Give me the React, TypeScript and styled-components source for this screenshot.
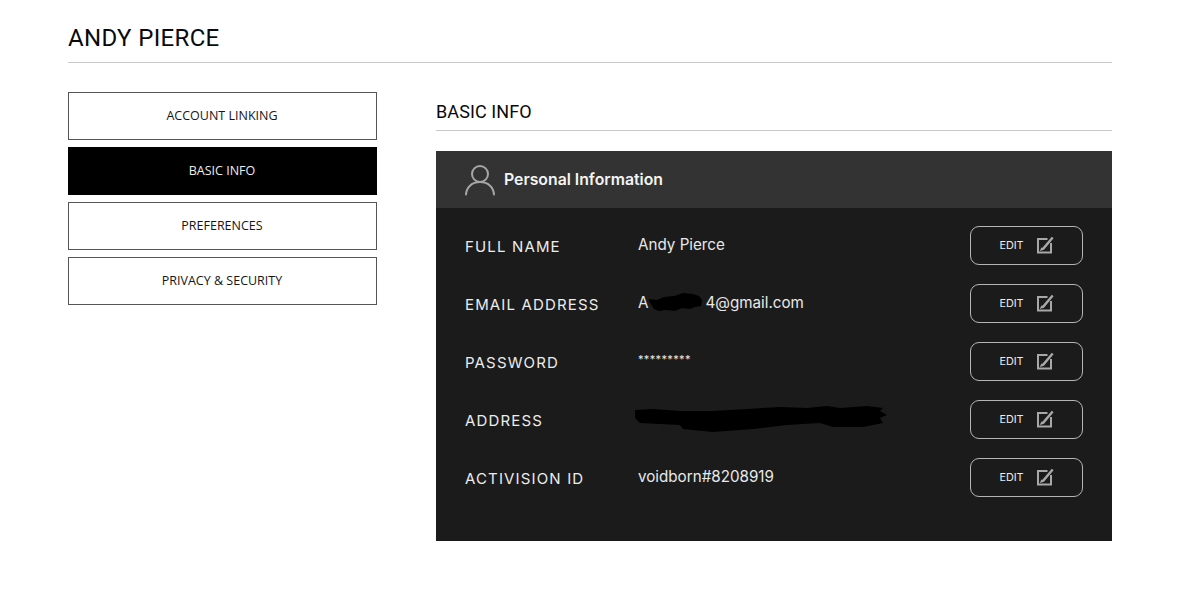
import React from "react";
import styled, { createGlobalStyle } from "styled-components";

const Global = createGlobalStyle`
  html, body { margin: 0; padding: 0; background: #fff; }
  body { font-family: "Open Sans", "Liberation Sans", sans-serif; }
`;

const Page = styled.div`
  width: 1044px;
  height: 606px;
  padding: 0 88px 0 68px;
  overflow: hidden;
`;

const Header = styled.header`
  box-sizing: border-box;
  height: 63px;
  padding-top: 23px;
  border-bottom: 1px solid #c9c9c9;
`;

const Title = styled.h1`
  margin: 0;
  font: 400 24px/30px Roboto, "Liberation Sans", sans-serif;
  letter-spacing: 0.35px;
  color: #0a0a0a;
`;

const Columns = styled.div`
  display: flex;
  gap: 59px;
  padding-top: 29px;
`;

const Sidebar = styled.nav`
  width: 309px;
  flex: none;
  display: flex;
  flex-direction: column;
  gap: 7px;
`;

const NavItem = styled.div<{ $active?: boolean }>`
  height: 48px;
  box-sizing: border-box;
  display: flex;
  align-items: center;
  justify-content: center;
  border: 1px solid ${(p) => (p.$active ? "#000" : "#555")};
  background: ${(p) => (p.$active ? "#000" : "#fff")};
  color: ${(p) => (p.$active ? "#ececec" : "#161616")};
  font-size: 12.5px;
  letter-spacing: 0;
  padding: 0 1px 1px 0;
`;

const Main = styled.main`
  width: 676px;
  flex: none;
`;

const SectionTitle = styled.h2`
  margin: 0;
  height: 39px;
  box-sizing: border-box;
  padding-top: 8px;
  border-bottom: 1px solid #c9c9c9;
  font: 400 18px/24px Roboto, "Liberation Sans", sans-serif;
  letter-spacing: 0.1px;
  color: #0a0a0a;
`;

const Panel = styled.section`
  margin-top: 20px;
  height: 390px;
  background: #1b1b1b;
`;

const PanelHead = styled.div`
  height: 57px;
  background: #333;
  display: flex;
  align-items: center;
  gap: 8px;
  padding-left: 28px;
  color: #f4f4f4;
  font: 600 15.8px Inter, "Liberation Sans", sans-serif;
`;

const Rows = styled.div`
  padding: 17px 29px 0;
  display: flex;
  flex-direction: column;
  gap: 18px;
`;

const Row = styled.div`
  height: 40px;
  display: flex;
  align-items: center;
`;

const Label = styled.div`
  width: 173px;
  flex: none;
  padding-top: 2px;
  font: 400 15px Inter, "Liberation Sans", sans-serif;
  letter-spacing: 1.15px;
  color: #ececec;
`;

const Value = styled.div`
  flex: 1;
  display: flex;
  align-items: center;
  height: 20px;
  margin-top: -1px;
  font: 400 15.2px Inter, "Liberation Sans", sans-serif;
  color: #e8e8e8;
`;

const Stars = styled.span`
  font-size: 11px;
  letter-spacing: 0.35px;
  margin-top: -3px;
`;

const EditButton = styled.button`
  width: 113px;
  height: 39px;
  box-sizing: border-box;
  border: 1px solid #b5b5b5;
  border-radius: 9px;
  background: transparent;
  color: #ececec;
  display: flex;
  align-items: center;
  justify-content: center;
  gap: 12px;
  padding: 0;
  font: 400 10.8px Inter, "Liberation Sans", sans-serif;
`;

const Scribble = styled.svg`
  display: block;
  flex: none;
`;

const AddressScribble = styled(Scribble)`
  margin-left: -3px;
`;

const UserIcon = () => (
  <svg width="32" height="32" viewBox="0 0 32 32" fill="none" stroke="#a6a6a6" strokeWidth="2" strokeLinecap="round">
    <circle cx="16" cy="10" r="8" />
    <path d="M2 30.500c.5-7.500 6-12.500 14-12.500s13.500 5 14 12.500" />
  </svg>
);

const EditIcon = () => (
  <svg width="18" height="18" viewBox="0 0 18 18" fill="none" stroke="#a8a8a8" strokeWidth="2">
    <path d="M11.500 3H2v13.500h13V7" />
    <path d="M6.500 12l-.5 1 1.300-.4L16.700 1.500" strokeWidth="2.400" />
  </svg>
);

const EmailScribble = () => (
  <Scribble width="57" height="19" viewBox="0 0 57 19">
    <path d="M1 6 9 7l7-3 10-1 9-3 10 1 6 2 3 4-1 6-6 1-5 2-8-1-7 3-9-1-7 1-5-2-3-5-2-3z" fill="#000" />
  </Scribble>
);

const LongScribble = () => (
  <AddressScribble width="252" height="27" viewBox="0 0 252 27">
    <path
      d="M0 5 18 4 45 6 78 6 112 4 145 2 172 3 192 1 205 3 232 1 248 3 245 6 252 10 245 13 248 18 228 22 198 22 185 18 152 20 118 24 78 27 48 24 45 20 5 18 0 13z"
      fill="#000"
    />
  </AddressScribble>
);

const rows: { label: string; value: React.ReactNode }[] = [
  { label: "FULL NAME", value: "Andy Pierce" },
  {
    label: "EMAIL ADDRESS",
    value: (
      <>
        A
        <EmailScribble />
        4@gmail.com
      </>
    ),
  },
  { label: "PASSWORD", value: <Stars>*********</Stars> },
  { label: "ADDRESS", value: <LongScribble /> },
  { label: "ACTIVISION ID", value: "voidborn#8208919" },
];

const nav = ["ACCOUNT LINKING", "BASIC INFO", "PREFERENCES", "PRIVACY & SECURITY"];

export default function App() {
  return (
    <Page>
      <Global />
      <Header>
        <Title>ANDY PIERCE</Title>
      </Header>
      <Columns>
        <Sidebar>
          {nav.map((n) => (
            <NavItem key={n} $active={n === "BASIC INFO"}>
              {n}
            </NavItem>
          ))}
        </Sidebar>
        <Main>
          <SectionTitle>BASIC INFO</SectionTitle>
          <Panel>
            <PanelHead>
              <UserIcon />
              Personal Information
            </PanelHead>
            <Rows>
              {rows.map((r) => (
                <Row key={r.label}>
                  <Label>{r.label}</Label>
                  <Value>{r.value}</Value>
                  <EditButton>
                    EDIT
                    <EditIcon />
                  </EditButton>
                </Row>
              ))}
            </Rows>
          </Panel>
        </Main>
      </Columns>
    </Page>
  );
}
